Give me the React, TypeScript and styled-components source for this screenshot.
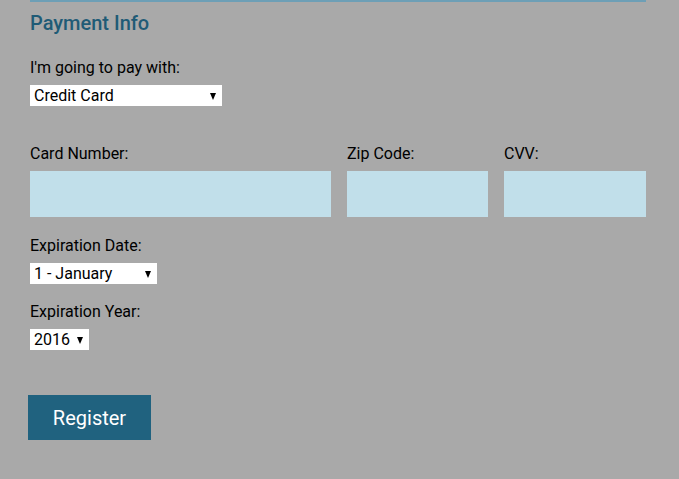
import React, { useState } from 'react';
import styled, { createGlobalStyle } from 'styled-components';

const GlobalStyle = createGlobalStyle`
  html, body {
    margin: 0;
    padding: 0;
    background: #a9a9a9;
    font-family: Roboto, "Liberation Sans", sans-serif;
  }
`;

const Page = styled.div`
  width: 616px;
  min-height: 479px;
  padding-left: 30px;
  box-sizing: content-box;
`;

const Rule = styled.div`
  height: 2px;
  background: #6d9fb6;
`;

const Heading = styled.h2`
  margin: 9px 0 0;
  font-size: 20px;
  line-height: 24px;
  font-weight: 500;
  color: #1f5b76;
`;

const Label = styled.label<{ $top: number }>`
  display: block;
  margin-top: ${(p) => p.$top}px;
  font-size: 16px;
  line-height: 19px;
  color: #000;
`;

const SelectWrap = styled.div<{ $width: number }>`
  position: relative;
  width: ${(p) => p.$width}px;
  height: 21px;
  margin-top: 8px;
  background: #fff;

  &::after {
    content: '';
    position: absolute;
    right: 6px;
    top: 8px;
    border-left: 3.5px solid transparent;
    border-right: 3.5px solid transparent;
    border-top: 7px solid #000;
    pointer-events: none;
  }
`;

const Select = styled.select`
  appearance: none;
  display: block;
  width: 100%;
  height: 21px;
  margin: 0;
  padding: 0 0 0 4px;
  border: none;
  border-radius: 0;
  background: transparent;
  font-family: Roboto, "Liberation Sans", sans-serif;
  font-size: 16px;
  color: #000;
  outline: none;
`;

const CardRow = styled.div`
  display: grid;
  grid-template-columns: 301px 141px 142px;
  column-gap: 16px;
  margin-top: 38px;
`;

const Field = styled.div`
  display: flex;
  flex-direction: column;
`;

const FieldLabel = styled.label`
  font-size: 16px;
  line-height: 19px;
  color: #000;
  margin-bottom: 8px;
`;

const TextInput = styled.input`
  height: 46px;
  box-sizing: border-box;
  border: none;
  margin: 0;
  padding: 0 10px;
  background: #c1dfea;
  font-family: Roboto, "Liberation Sans", sans-serif;
  font-size: 16px;
  outline: none;
`;

const RegisterButton = styled.button`
  display: block;
  margin: 45px 0 0 -2px;
  width: 123px;
  height: 45px;
  border: none;
  padding: 0;
  background: #20627f;
  color: #fff;
  font-family: Roboto, "Liberation Sans", sans-serif;
  font-size: 20px;
  cursor: pointer;
`;

const months = [
  'January', 'February', 'March', 'April', 'May', 'June',
  'July', 'August', 'September', 'October', 'November', 'December',
];

const years = [2016, 2017, 2018, 2019, 2020];

function App() {
  const [payment, setPayment] = useState('credit card');

  return (
    <Page>
      <GlobalStyle />
      <Rule />
      <Heading>Payment Info</Heading>

      <Label $top={23} htmlFor="payment">I'm going to pay with:</Label>
      <SelectWrap $width={192}>
        <Select id="payment" value={payment} onChange={(e) => setPayment(e.target.value)}>
          <option value="credit card">Credit Card</option>
          <option value="paypal">PayPal</option>
          <option value="bitcoin">Bitcoin</option>
        </Select>
      </SelectWrap>

      <CardRow>
        <Field>
          <FieldLabel htmlFor="cc-num">Card Number:</FieldLabel>
          <TextInput id="cc-num" type="text" />
        </Field>
        <Field>
          <FieldLabel htmlFor="zip">Zip Code:</FieldLabel>
          <TextInput id="zip" type="text" />
        </Field>
        <Field>
          <FieldLabel htmlFor="cvv">CVV:</FieldLabel>
          <TextInput id="cvv" type="text" />
        </Field>
      </CardRow>

      <Label $top={19} htmlFor="exp-month">Expiration Date:</Label>
      <SelectWrap $width={127}>
        <Select id="exp-month">
          {months.map((m, i) => (
            <option key={m} value={i + 1}>{`${i + 1} - ${m}`}</option>
          ))}
        </Select>
      </SelectWrap>

      <Label $top={18} htmlFor="exp-year">Expiration Year:</Label>
      <SelectWrap $width={59}>
        <Select id="exp-year">
          {years.map((y) => (
            <option key={y} value={y}>{y}</option>
          ))}
        </Select>
      </SelectWrap>

      <RegisterButton type="submit">Register</RegisterButton>
    </Page>
  );
}

export default App;
